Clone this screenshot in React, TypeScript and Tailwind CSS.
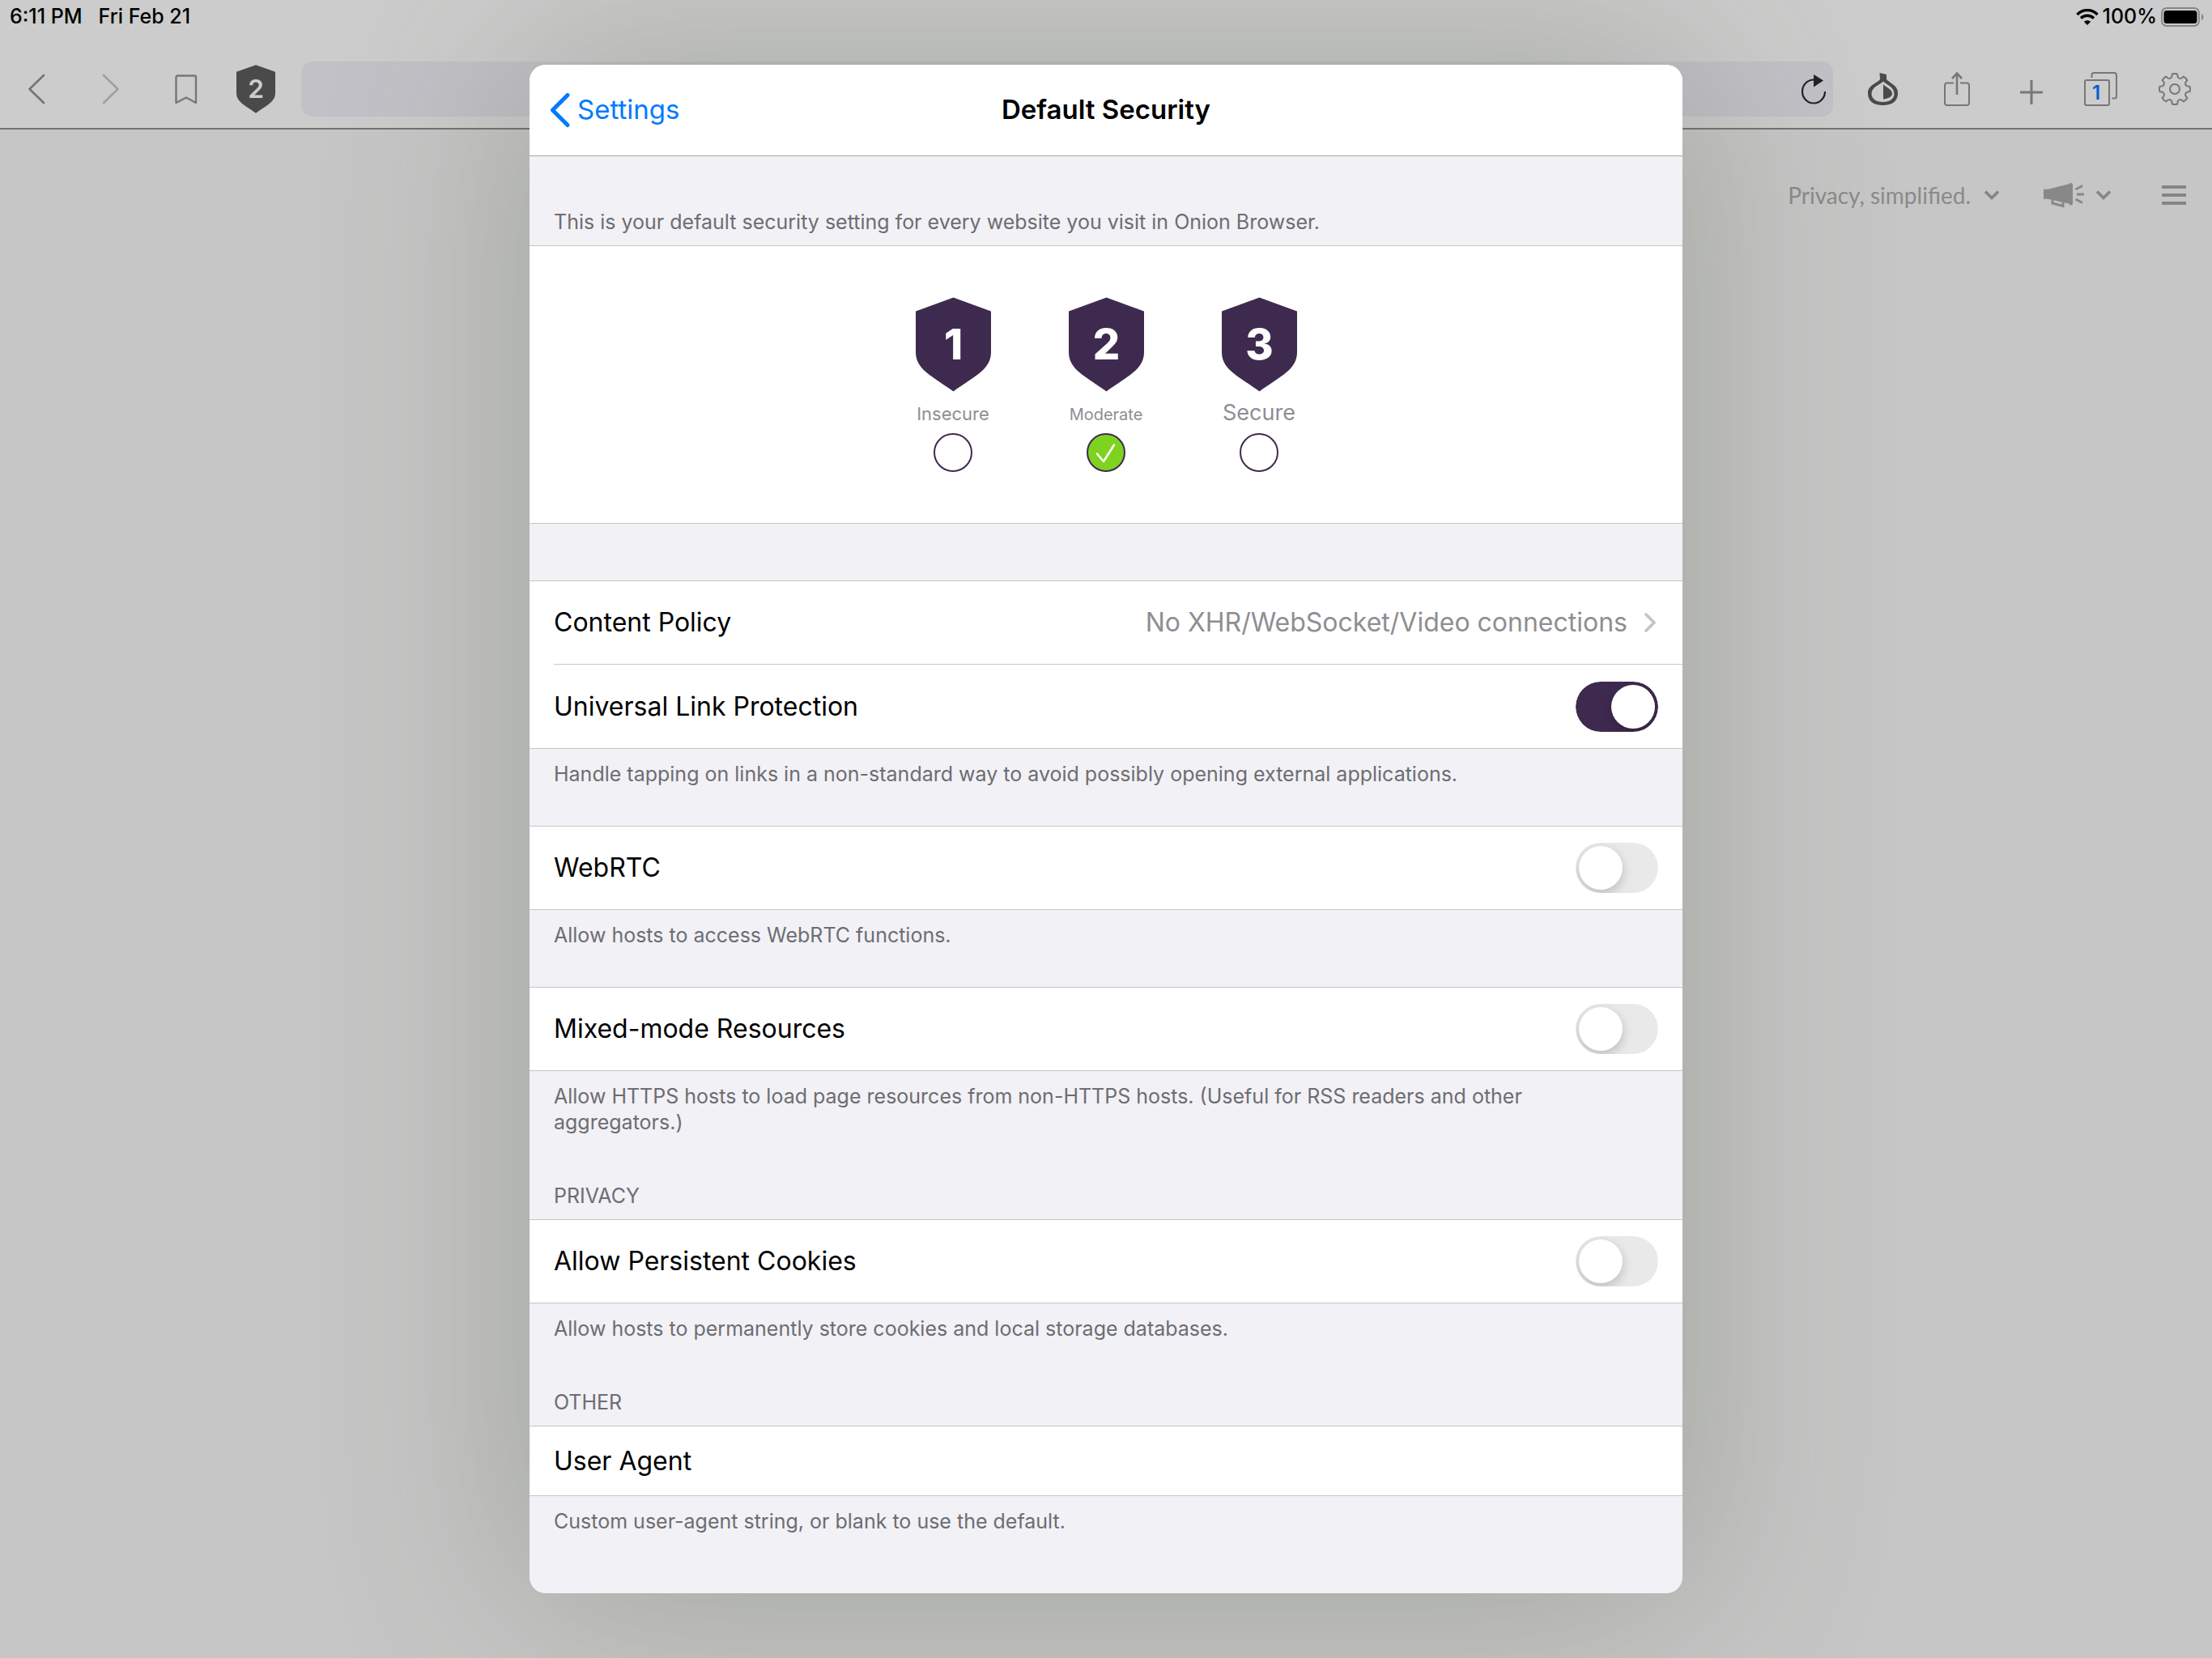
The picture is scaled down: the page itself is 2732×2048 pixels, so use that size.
import React from "react";

function Shield({ n, className, fill, text, weight, size, baseline }: { n: string; className: string; fill: string; text: string; weight: number; size: number; baseline: number }) {
  return (
    <svg viewBox="0 0 94 117" className={className} aria-hidden="true">
      <path d="M47 0 L94 17 V68 C94 90 73 98 47 117 C21 98 0 90 0 68 V17 Z" fill={fill} />
      <text x="47" y={baseline} textAnchor="middle" fontFamily="Inter" fontWeight={weight} fontSize={size} fill={text}>{n}</text>
    </svg>
  );
}

function gearPath() {
  const at = (deg: number, r: number) => {
    const a = (deg * Math.PI) / 180;
    return `${(20 + r * Math.sin(a)).toFixed(2)} ${(20 - r * Math.cos(a)).toFixed(2)}`;
  };
  let d = `M${at(-10, 18.8)}`;
  for (let k = 0; k < 8; k++) {
    const a = k * 45;
    d += ` Q${at(a, 19.6)} ${at(a + 10, 18.8)} L${at(a + 13, 15.8)} Q${at(a + 22.5, 13.2)} ${at(a + 32, 15.8)} L${at(a + 35, 18.8)}`;
  }
  return d + " Z";
}

function Toggle({ id, on = false }: { id: string; on?: boolean }) {
  return (
    <span className="relative flex h-[62px] w-[102px] shrink-0 overflow-hidden rounded-full">
      <input id={id} type="checkbox" role="switch" defaultChecked={on} className="peer h-full w-full appearance-none rounded-full bg-[#e9e9e9] checked:bg-[#3f2a4f]" />
      <span className="pointer-events-none absolute left-1 top-1 size-[54px] rounded-full bg-white shadow-[0_5px_14px_rgba(0,0,0,0.2)] peer-checked:left-11" />
    </span>
  );
}

function ToggleRow({ id, label, on, className = "min-h-[104px] border-y border-[#c6c6c8]" }: { id: string; label: string; on?: boolean; className?: string }) {
  return (
    <div className={"flex items-center justify-between bg-white px-[30px] " + className}>
      <label htmlFor={id} className="text-[32px] leading-10 text-black">{label}</label>
      <Toggle id={id} on={on} />
    </div>
  );
}

function Note({ children, className = "pt-[15px] pb-12" }: { children: React.ReactNode; className?: string }) {
  return <p className={"pl-[30px] pr-[120px] text-[25px] leading-8 text-[#6d6d72] " + className}>{children}</p>;
}

function GroupTitle({ children }: { children: React.ReactNode }) {
  return <h2 className="px-[30px] pb-[13px] text-[25px] leading-8 text-[#6d6d72]">{children}</h2>;
}

function Chevron() {
  return (
    <svg viewBox="0 0 20 14" className="h-[14px] w-5" fill="none" stroke="#858585" strokeWidth="3.6"><path d="M2 2.500 L10 10.500 L18 2.500" /></svg>
  );
}

const levels = [
  { n: "1", label: "Insecure", className: "text-[22px]", on: false },
  { n: "2", label: "Moderate", className: "text-[20px]", on: true },
  { n: "3", label: "Secure", className: "text-[27px]", on: false },
];

export default function App() {
  return (
    <div className="relative min-h-screen overflow-hidden bg-[#c6c6c6] font-['Inter',sans-serif]">
      <header className="border-b-2 border-[#747278] bg-[#cccccc]">
        <div className="flex h-10 items-center justify-between pl-3 pr-[10px] pt-px text-[24px] font-medium text-black">
          <div className="flex gap-5 text-[25px]"><span>6:11 PM</span><span>Fri Feb 21</span></div>
          <div className="flex items-center gap-[5px]">
            <svg viewBox="0 0 28 20" className="h-5 w-7" fill="none" stroke="#000" strokeWidth="3.4">
              <path d="M1.500 7 C8.500 -.2 19.500 -.2 26.500 7" /><path d="M6 11.500 C10.500 7.200 17.500 7.200 22 11.500" />
              <path d="M14 20 L9.800 15.800 C12 13.600 16 13.600 18.200 15.800 Z" fill="#000" stroke="none" />
            </svg>
            <span className="text-[25px]">100%</span>
            <svg viewBox="0 0 53 24" className="h-6 w-[53px]">
              <rect x="1" y="1" width="46" height="22" rx="6" fill="none" stroke="#858585" strokeWidth="1.800" />
              <rect x="3.500" y="4" width="41" height="16" rx="3.500" /><path d="M50 8 Q52.500 9 52.500 12 T50 16 Z" fill="#858585" />
            </svg>
          </div>
        </div>
        <div className="flex items-center pb-[14px] pt-9">
          <button aria-label="Back" className="ml-[34px]"><svg viewBox="0 0 22 38" className="h-[38px] w-[22px]" fill="none" stroke="#747474" strokeWidth="2.600" strokeLinecap="round" strokeLinejoin="round"><path d="M20 2 L2.500 19 L20 36" /></svg></button>
          <button aria-label="Forward" className="ml-[70px]"><svg viewBox="0 0 22 38" className="h-[38px] w-[22px]" fill="none" stroke="#a0a0a0" strokeWidth="2.600" strokeLinecap="round" strokeLinejoin="round"><path d="M2 2 L19.500 19 L2 36" /></svg></button>
          <button aria-label="Bookmarks" className="ml-[68px]"><svg viewBox="0 0 28 38" className="h-[38px] w-7" fill="none" stroke="#777" strokeWidth="2.400" strokeLinejoin="round"><path d="M1.500 36 V4.500 Q1.500 2.500 3.500 2.500 H24 Q26 2.500 26 4.500 V36 L14 29.500 Z" /></svg></button>
          <button aria-label="Security level 2" className="ml-12"><Shield n="2" className="h-[60px] w-12" fill="#4a4a4a" text="#cccccc" weight={600} size={62} baseline={80} /></button>
          <div className="ml-8 flex h-[68px] flex-1 items-center rounded-[14px] bg-[#c2c1c7]">
            <input aria-label="Address" className="h-full min-w-0 flex-1 bg-transparent px-6 text-[32px] outline-none" />
            <button aria-label="Reload" className="mr-[9px]"><svg viewBox="0 0 30 38" className="h-[38px] w-[30px]"><path d="M29 22 A14 14.500 0 1 1 15 7.500" fill="none" stroke="#222" strokeWidth="2.200" /><path d="M15 1 L27 8.500 L15 16.500 Z" fill="#222" /></svg></button>
          </div>
          <button aria-label="New identity" className="ml-[43px]"><svg viewBox="0 0 38 40" className="h-10 w-[38px]"><path d="M14.500 0 L23 2 V8 C27 13 37 15 37 25 C37 35 30 40 18.500 40 C7 40 0 35 0 25 C0 15 11 13 15 8 Z" fill="#4a4a4a" /><path d="M19 10.500 C15 15 4.500 17 4.500 26 C4.500 32 10 36 18.500 36 C27 36 32.500 32 32.500 26 C32.500 17 23 15 19 10.500 Z" fill="#ccc" /><path d="M19 14 C22 18 30 20 30 25.500 C30 30 24 32 19 32.500 Z" fill="#4a4a4a" /></svg></button>
          <button aria-label="Share" className="ml-14"><svg viewBox="0 0 32 42" className="h-[42px] w-8" fill="none" stroke="#777" strokeWidth="2"><path d="M12 13.500 H4 Q1 13.500 1 16.500 V38 Q1 41 4 41 H28 Q31 41 31 38 V16.500 Q31 13.500 28 13.500 H20" /><path d="M16 28 V2 M10 8 L16 1.500 L22 8" strokeWidth="2.600" /></svg></button>
          <button aria-label="New tab" className="ml-[62px] mt-2"><svg viewBox="0 0 28 30" className="h-[30px] w-7" stroke="#777" strokeWidth="3"><path d="M14 0 V30 M0 15 H28" /></svg></button>
          <button aria-label="Tabs" className="ml-[51px]"><svg viewBox="0 0 41 42" className="h-[42px] w-[41px]" fill="none" stroke="#777" strokeWidth="2"><rect x="1" y="10" width="30" height="31" rx="2" /><path d="M9.500 7 V4 Q9.500 1 12 1 H37 Q40 1 40 4 V30 Q40 32.500 38 32.500 H34.500" /><text x="15" y="34" textAnchor="middle" stroke="none" fill="#0560cc" fontFamily="Inter" fontWeight="600" fontSize="24">1</text></svg></button>
          <button aria-label="Settings" className="ml-[51px] mr-[26px]"><svg viewBox="0 0 40 40" className="size-10" fill="none" stroke="#777" strokeWidth="2" strokeLinejoin="round"><circle cx="20" cy="20" r="6" /><path d={gearPath()} /></svg></button>
        </div>
      </header>
      <nav className="flex h-[162px] items-center justify-end pr-8 text-[#8a8a8a]">
        <button className="flex items-center gap-4 text-[28px] font-['Lato']">Privacy, simplified.<Chevron /></button>
        <button aria-label="Announcements" className="ml-[53px] flex items-center gap-[13px]"><svg viewBox="0 0 52 32" className="h-8 w-[52px]" fill="#888"><path d="M1 10 Q1 8 3 8.500 L5 9 L32 2.500 Q33 1 35 1 Q37 1 37 3 V26 Q37 28.500 35 28.500 Q33 28.500 32 26.500 L5 20.500 L3 21 Q1 21 1 19.500 Z" /><path d="M12 22 V26 L25 29.500 V25 M40.500 9 L49 4.500 M42 15 H51 M40.500 21 L49 25.500" fill="none" stroke="#888" strokeWidth="3" /></svg><Chevron /></button>
        <button aria-label="Menu" className="ml-[62px] flex w-[30px] flex-col gap-[6px]"><span className="h-1 bg-[#858585]" /><span className="h-1 bg-[#858585]" /><span className="h-1 bg-[#858585]" /></button>
      </nav>

      <div className="absolute inset-x-0 top-20 flex justify-center">
        <main className="w-full max-w-[1424px] overflow-hidden rounded-[20px] bg-[#f2f1f6] shadow-[0_0_250px_rgba(65,78,51,0.3)]">
          <div className="relative flex min-h-[113px] items-center justify-center border-b border-[#a7a7aa] bg-white">
            <button className="absolute left-6 flex items-center gap-2 text-[33px] text-[#007aff]"><svg viewBox="0 0 27 44" className="h-11 w-[27px]" fill="none" stroke="#007aff" strokeWidth="5" strokeLinecap="round" strokeLinejoin="round"><path d="M23 3.500 L4.500 22 L23 40.500" /></svg>Settings</button>
            <h1 className="text-[33px] font-semibold text-black">Default Security</h1>
          </div>
          <Note className="pb-[13px] pt-[65px]">This is your default security setting for every website you visit in Onion Browser.</Note>
          <fieldset className="flex justify-center gap-24 border-y border-[#c6c6c8] bg-white pb-[63px] pt-[63px]">
            {levels.map((l) => (
              <label key={l.n} className="flex w-[93px] flex-col items-center">
                <Shield n={l.n} className="h-[117px] w-[93px]" fill="#3f2a4f" text="#fff" weight={800} size={53} baseline={77} />
                <span className="text-[27px] leading-[51px] text-[#8e8e93]"><span className={"leading-none " + l.className}>{l.label}</span></span>
                <span className="relative flex size-12">
                  <input type="radio" name="level" defaultChecked={l.on} className="peer size-12 appearance-none rounded-full border-2 border-[#3f2a4f] checked:bg-[#7ed321]" />
                  <svg viewBox="0 0 48 48" className="pointer-events-none absolute inset-0 hidden peer-checked:block" fill="none" stroke="#fff" strokeWidth="2.500" strokeLinecap="round" strokeLinejoin="round"><path d="M13 25.500 L21 35 L34 14.500" /></svg>
                </span>
              </label>
            ))}
          </fieldset>
          <div className="mt-[70px] border-y border-[#c6c6c8] bg-white">
            <button className="flex min-h-[102px] w-full items-center pl-[30px] pr-8 text-left text-[32px]"><span className="flex-1">Content Policy</span><span className="text-[#8e8e93]">No XHR/WebSocket/Video connections</span><svg viewBox="0 0 16 26" className="ml-5 h-[26px] w-4" fill="none" stroke="#c4c4c7" strokeWidth="3.600" strokeLinecap="round" strokeLinejoin="round"><path d="M3 3 L13 13 L3 23" /></svg></button>
            <div className="ml-[30px] h-px bg-[#c6c6c8]" />
            <ToggleRow id="ulp" label="Universal Link Protection" on className="min-h-[103px]" />
          </div>
          <Note>Handle tapping on links in a non-standard way to avoid possibly opening external applications.</Note>
          <ToggleRow id="webrtc" label="WebRTC" />
          <Note>Allow hosts to access WebRTC functions.</Note>
          <ToggleRow id="mixed" label="Mixed-mode Resources" />
          <Note className="pb-[59px] pt-[15px]">Allow HTTPS hosts to load page resources from non-HTTPS hosts. (Useful for RSS readers and other aggregators.)</Note>
          <GroupTitle>PRIVACY</GroupTitle>
          <ToggleRow id="cookies" label="Allow Persistent Cookies" />
          <Note className="pb-[59px] pt-[15px]">Allow hosts to permanently store cookies and local storage databases.</Note>
          <GroupTitle>OTHER</GroupTitle>
          <div className="flex min-h-[87px] items-center border-y border-[#c6c6c8] bg-white px-[30px] text-[32px]"><label htmlFor="ua">User Agent</label><input id="ua" className="ml-6 min-w-0 flex-1 bg-transparent outline-none" /></div>
          <Note className="pb-[73px] pt-[15px]">Custom user-agent string, or blank to use the default.</Note>
        </main>
      </div>
    </div>
  );
}
